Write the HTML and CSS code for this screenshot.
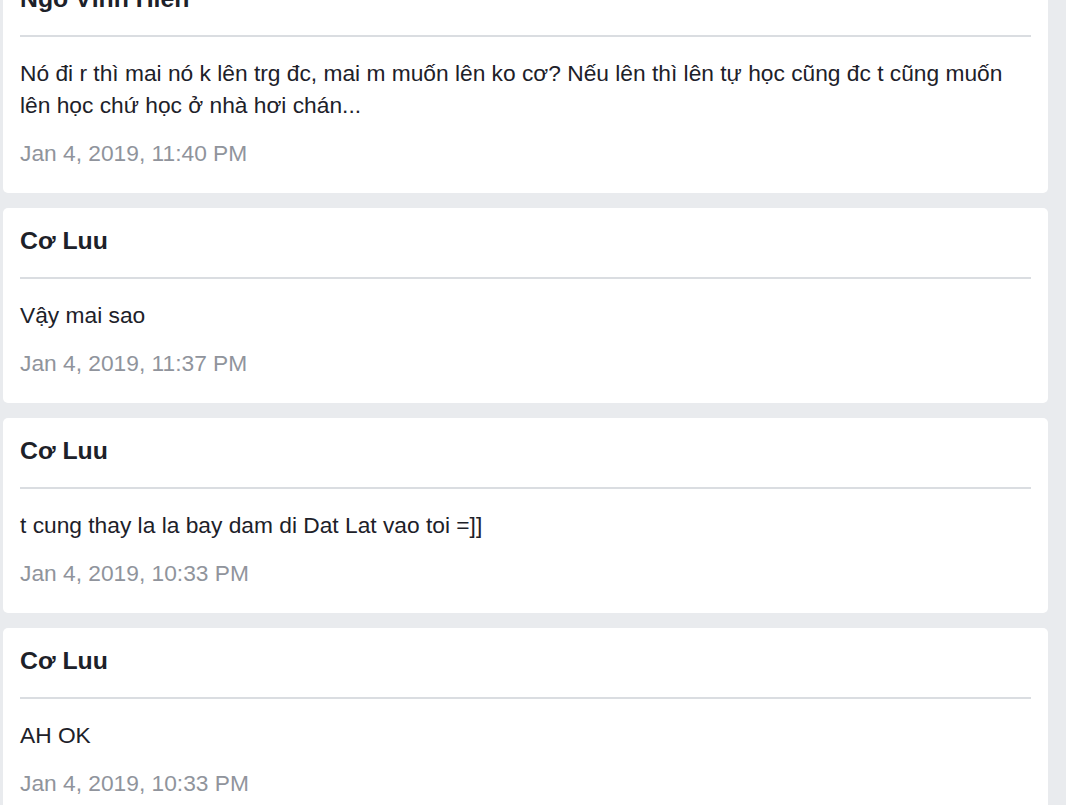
FILE: index.html
```html
<!DOCTYPE html>
<html lang="vi">
<head>
<meta charset="utf-8">
<link rel="stylesheet" href="styles.css">
</head>
<body>
<div class="list">
  <div class="card">
    <div class="name">Ngô Vĩnh Hiển</div>
    <div class="rule"></div>
    <div class="msg">Nó đi r thì mai nó k lên trg đc, mai m muốn lên ko cơ? Nếu lên thì lên tự học cũng đc t cũng muốn lên học chứ học ở nhà hơi chán...</div>
    <div class="date">Jan 4, 2019, 11:40 PM</div>
  </div>
  <div class="card">
    <div class="name">Cơ Luu</div>
    <div class="rule"></div>
    <div class="msg">Vậy mai sao</div>
    <div class="date">Jan 4, 2019, 11:37 PM</div>
  </div>
  <div class="card">
    <div class="name">Cơ Luu</div>
    <div class="rule"></div>
    <div class="msg">t cung thay la la bay dam di Dat Lat vao toi =]]</div>
    <div class="date">Jan 4, 2019, 10:33 PM</div>
  </div>
  <div class="card">
    <div class="name">Cơ Luu</div>
    <div class="rule"></div>
    <div class="msg">AH OK</div>
    <div class="date">Jan 4, 2019, 10:33 PM</div>
  </div>
</div>
</body>
</html>
```
FILE: styles.css
```css
html, body {
  margin: 0;
  padding: 0;
  background: #e9ebee;
  font-family: "Liberation Sans", Arial, sans-serif;
  color: #1d2129;
  overflow: hidden;
  height: 805px;
}
.list {
  display: flex;
  flex-direction: column;
  gap: 15px;
  margin: -34px 18px 0 3px;
}
.card {
  background: #fff;
  border-radius: 5px;
  padding: 17px 17px 23.5px 17px;
  display: flex;
  flex-direction: column;
}
.name {
  font-size: 24.8px;
  font-weight: bold;
  line-height: 32px;
}
.rule {
  height: 2px;
  background: #dadde1;
  margin: 20px 0 21px 0;
}
.msg {
  font-size: 22.75px;
  line-height: 31.5px;
}
.date {
  font-size: 22.75px;
  line-height: 31.5px;
  margin-top: 16.5px;
  color: #90949c;
}
```
